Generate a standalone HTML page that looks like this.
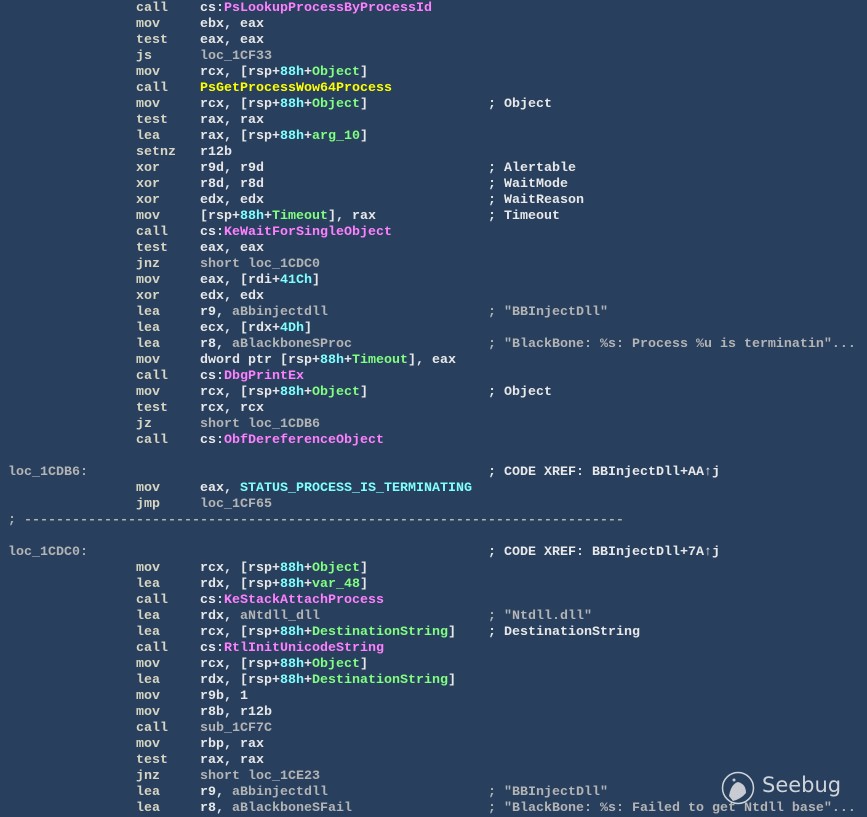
<!DOCTYPE html>
<html><head><meta charset="utf-8"><style>
html,body{margin:0;padding:0;}
body{width:867px;height:817px;background:#283f5e;overflow:hidden;position:relative;font-family:"Liberation Mono",monospace;font-size:13.33px;font-weight:bold;color:#e8e8e8;}
.r{position:absolute;left:0;height:16px;line-height:16px;width:867px;white-space:pre;}
.r span{position:absolute;top:1px;}
.a{left:8px}.b{left:136px;color:#d8d6c2}.o{left:200px}.k{left:488px}
.l{color:#b4b4b4}.p{color:#ff80ff}.c{color:#80ffff}.g{color:#80ff80}.y{color:#ffff00}
i{font-style:normal}
.logo{position:absolute;left:721px;top:771px;}
.lt{position:absolute;left:762px;top:773px;font-family:"DejaVu Sans","Liberation Sans",sans-serif;font-weight:normal;font-size:21px;color:#d0d4da;}
</style></head><body>
<div class="r" style="top:0"><span class="b">call</span><span class="o">cs:<i class="p">PsLookupProcessByProcessId</i></span></div>
<div class="r" style="top:16px"><span class="b">mov</span><span class="o">ebx, eax</span></div>
<div class="r" style="top:32px"><span class="b">test</span><span class="o">eax, eax</span></div>
<div class="r" style="top:48px"><span class="b">js</span><span class="o l">loc_1CF33</span></div>
<div class="r" style="top:64px"><span class="b">mov</span><span class="o">rcx, [rsp+<i class="c">88h</i>+<i class="g">Object</i>]</span></div>
<div class="r" style="top:80px"><span class="b">call</span><span class="o y">PsGetProcessWow64Process</span></div>
<div class="r" style="top:96px"><span class="b">mov</span><span class="o">rcx, [rsp+<i class="c">88h</i>+<i class="g">Object</i>]</span><span class="k">; Object</span></div>
<div class="r" style="top:112px"><span class="b">test</span><span class="o">rax, rax</span></div>
<div class="r" style="top:128px"><span class="b">lea</span><span class="o">rax, [rsp+<i class="c">88h</i>+<i class="g">arg_10</i>]</span></div>
<div class="r" style="top:144px"><span class="b">setnz</span><span class="o">r12b</span></div>
<div class="r" style="top:160px"><span class="b">xor</span><span class="o">r9d, r9d</span><span class="k">; Alertable</span></div>
<div class="r" style="top:176px"><span class="b">xor</span><span class="o">r8d, r8d</span><span class="k">; WaitMode</span></div>
<div class="r" style="top:192px"><span class="b">xor</span><span class="o">edx, edx</span><span class="k">; WaitReason</span></div>
<div class="r" style="top:208px"><span class="b">mov</span><span class="o">[rsp+<i class="c">88h</i>+<i class="g">Timeout</i>], rax</span><span class="k">; Timeout</span></div>
<div class="r" style="top:224px"><span class="b">call</span><span class="o">cs:<i class="p">KeWaitForSingleObject</i></span></div>
<div class="r" style="top:240px"><span class="b">test</span><span class="o">eax, eax</span></div>
<div class="r" style="top:256px"><span class="b">jnz</span><span class="o l">short loc_1CDC0</span></div>
<div class="r" style="top:272px"><span class="b">mov</span><span class="o">eax, [rdi+<i class="c">41Ch</i>]</span></div>
<div class="r" style="top:288px"><span class="b">xor</span><span class="o">edx, edx</span></div>
<div class="r" style="top:304px"><span class="b">lea</span><span class="o">r9, <i class="l">aBbinjectdll</i></span><span class="k l">; "BBInjectDll"</span></div>
<div class="r" style="top:320px"><span class="b">lea</span><span class="o">ecx, [rdx+<i class="c">4Dh</i>]</span></div>
<div class="r" style="top:336px"><span class="b">lea</span><span class="o">r8, <i class="l">aBlackboneSProc</i></span><span class="k l">; "BlackBone: %s: Process %u is terminatin"...</span></div>
<div class="r" style="top:352px"><span class="b">mov</span><span class="o">dword ptr [rsp+<i class="c">88h</i>+<i class="g">Timeout</i>], eax</span></div>
<div class="r" style="top:368px"><span class="b">call</span><span class="o">cs:<i class="p">DbgPrintEx</i></span></div>
<div class="r" style="top:384px"><span class="b">mov</span><span class="o">rcx, [rsp+<i class="c">88h</i>+<i class="g">Object</i>]</span><span class="k">; Object</span></div>
<div class="r" style="top:400px"><span class="b">test</span><span class="o">rcx, rcx</span></div>
<div class="r" style="top:416px"><span class="b">jz</span><span class="o l">short loc_1CDB6</span></div>
<div class="r" style="top:432px"><span class="b">call</span><span class="o">cs:<i class="p">ObfDereferenceObject</i></span></div>
<div class="r" style="top:464px"><span class="a l">loc_1CDB6:</span><span class="k">; CODE XREF: BBInjectDll+AA&#x2191;j</span></div>
<div class="r" style="top:480px"><span class="b">mov</span><span class="o">eax, <i class="c">STATUS_PROCESS_IS_TERMINATING</i></span></div>
<div class="r" style="top:496px"><span class="b">jmp</span><span class="o l">loc_1CF65</span></div>
<div class="r" style="top:512px"><span class="a l">; ---------------------------------------------------------------------------</span></div>
<div class="r" style="top:544px"><span class="a l">loc_1CDC0:</span><span class="k">; CODE XREF: BBInjectDll+7A&#x2191;j</span></div>
<div class="r" style="top:560px"><span class="b">mov</span><span class="o">rcx, [rsp+<i class="c">88h</i>+<i class="g">Object</i>]</span></div>
<div class="r" style="top:576px"><span class="b">lea</span><span class="o">rdx, [rsp+<i class="c">88h</i>+<i class="g">var_48</i>]</span></div>
<div class="r" style="top:592px"><span class="b">call</span><span class="o">cs:<i class="p">KeStackAttachProcess</i></span></div>
<div class="r" style="top:608px"><span class="b">lea</span><span class="o">rdx, <i class="l">aNtdll_dll</i></span><span class="k l">; "Ntdll.dll"</span></div>
<div class="r" style="top:624px"><span class="b">lea</span><span class="o">rcx, [rsp+<i class="c">88h</i>+<i class="g">DestinationString</i>]</span><span class="k">; DestinationString</span></div>
<div class="r" style="top:640px"><span class="b">call</span><span class="o">cs:<i class="p">RtlInitUnicodeString</i></span></div>
<div class="r" style="top:656px"><span class="b">mov</span><span class="o">rcx, [rsp+<i class="c">88h</i>+<i class="g">Object</i>]</span></div>
<div class="r" style="top:672px"><span class="b">lea</span><span class="o">rdx, [rsp+<i class="c">88h</i>+<i class="g">DestinationString</i>]</span></div>
<div class="r" style="top:688px"><span class="b">mov</span><span class="o">r9b, 1</span></div>
<div class="r" style="top:704px"><span class="b">mov</span><span class="o">r8b, r12b</span></div>
<div class="r" style="top:720px"><span class="b">call</span><span class="o l">sub_1CF7C</span></div>
<div class="r" style="top:736px"><span class="b">mov</span><span class="o">rbp, rax</span></div>
<div class="r" style="top:752px"><span class="b">test</span><span class="o">rax, rax</span></div>
<div class="r" style="top:768px"><span class="b">jnz</span><span class="o l">short loc_1CE23</span></div>
<div class="r" style="top:784px"><span class="b">lea</span><span class="o">r9, <i class="l">aBbinjectdll</i></span><span class="k l">; "BBInjectDll"</span></div>
<div class="r" style="top:800px"><span class="b">lea</span><span class="o">r8, <i class="l">aBlackboneSFail</i></span><span class="k l">; "BlackBone: %s: Failed to get Ntdll base"...</span></div>
<svg class="logo" width="34" height="34" viewBox="0 0 34 34"><circle cx="17" cy="17" r="15.5" fill="none" stroke="#d0d4da" stroke-width="1.5"/><path d="M8 25 Q10 13 17 11 Q25 13 25 22 Q20 28 12 30 Z" fill="#c8ccd2"/><circle cx="13" cy="9" r="1.5" fill="#c8ccd2"/></svg>
<div class="lt">Seebug</div>
</body></html>
